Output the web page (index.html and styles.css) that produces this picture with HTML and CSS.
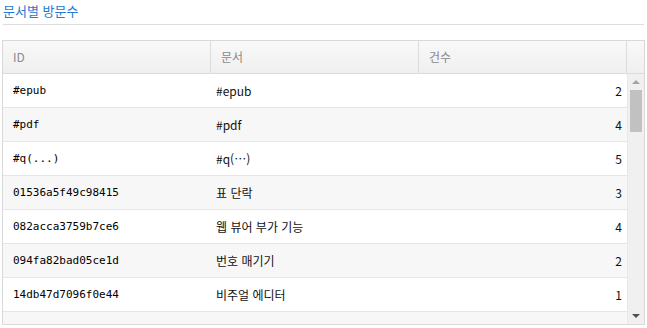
FILE: index.html
```html
<!DOCTYPE html>
<html lang="ko">
<head>
<meta charset="utf-8">
<link rel="stylesheet" href="styles.css">
</head>
<body>
<div class="page">
  <h1 class="title">문서별 방문수</h1>
  <div class="grid">
    <div class="head">
      <div class="hcell">ID</div>
      <div class="hcell">문서</div>
      <div class="hcell">건수</div>
      <div class="hcell hscroll"></div>
    </div>
    <div class="bodywrap">
      <div class="rows">
        <div class="row"><div class="c id">#epub</div><div class="c doc">#epub</div><div class="c num">2</div></div>
        <div class="row alt"><div class="c id">#pdf</div><div class="c doc">#pdf</div><div class="c num">4</div></div>
        <div class="row"><div class="c id">#q(...)</div><div class="c doc">#q(…)</div><div class="c num">5</div></div>
        <div class="row alt"><div class="c id">01536a5f49c98415</div><div class="c doc">표 단락</div><div class="c num">3</div></div>
        <div class="row"><div class="c id">082acca3759b7ce6</div><div class="c doc">웹 뷰어 부가 기능</div><div class="c num">4</div></div>
        <div class="row alt"><div class="c id">094fa82bad05ce1d</div><div class="c doc">번호 매기기</div><div class="c num">2</div></div>
        <div class="row"><div class="c id">14db47d7096f0e44</div><div class="c doc">비주얼 에디터</div><div class="c num">1</div></div>
        <div class="row alt"></div>
      </div>
      <div class="scrollbar">
        <div class="arrow up"></div>
        <div class="track"><div class="thumb"></div></div>
        <div class="arrow down"></div>
      </div>
    </div>
  </div>
</div>
</body>
</html>
```

FILE: styles.css
```css
* { box-sizing: border-box; }
html, body { margin: 0; padding: 0; background: #fff; }
body { font-family: "Noto Sans CJK KR", "Noto Sans", sans-serif; }
.page { width: 647px; height: 328px; padding: 0 2px; overflow: hidden; }
.title {
  margin: 0 1px;
  padding-top: 2px;
  height: 25px;
  font-size: 13px;
  font-weight: normal;
  line-height: 18px;
  color: #2479d2;
  border-bottom: 1px solid #dddddd;
}
.grid {
  margin-top: 15px;
  width: 643px;
  height: 285px;
  border: 1px solid #d9d9d9;
  display: flex;
  flex-direction: column;
}
.head {
  display: flex;
  height: 33px;
  border-bottom: 1px solid #dcdcdc;
  background: linear-gradient(#f9f9f9, #efefef);
}
.hcell {
  width: 208px;
  border-right: 1px solid #dcdcdc;
  padding-left: 10px;
  font-size: 12px;
  line-height: 32px;
  color: #8a8a8a;
}
.hcell.hscroll { width: 17px; border-right: none; padding: 0; }
.bodywrap { display: flex; flex: 1; overflow: hidden; }
.rows { width: 624px; overflow: hidden; }
.row {
  display: flex;
  height: 34px;
  flex-shrink: 0;
  border-bottom: 1px solid #e6e6e6;
  background: #fff;
}
.row.alt { background: #f7f7f7; }
.c { font-size: 12px; line-height: 33px; color: #111; white-space: nowrap; }
.c.id {
  width: 208px;
  padding-left: 10px;
  font-family: "DejaVu Sans Mono", "Liberation Mono", monospace;
  font-size: 11px;
  color: #000;
}
.c.doc { width: 209px; padding-left: 5px; }
.c.num { width: 207px; text-align: right; padding-right: 5px; }
.scrollbar {
  width: 17px;
  background: #f0f0f0;
  border-left: 1px solid #e8e8e8;
  display: flex;
  flex-direction: column;
}
.arrow { height: 16px; position: relative; }
.arrow::after {
  content: "";
  position: absolute;
  left: 4px;
  width: 0; height: 0;
  border-left: 4px solid transparent;
  border-right: 4px solid transparent;
}
.arrow.up::after { top: 6px; border-bottom: 4px solid #a3a3a3; }
.arrow.down::after { top: 6px; border-top: 4px solid #505050; }
.track { flex: 1; padding: 0 2px; }
.thumb { height: 42px; background: #c1c1c1; }
```
